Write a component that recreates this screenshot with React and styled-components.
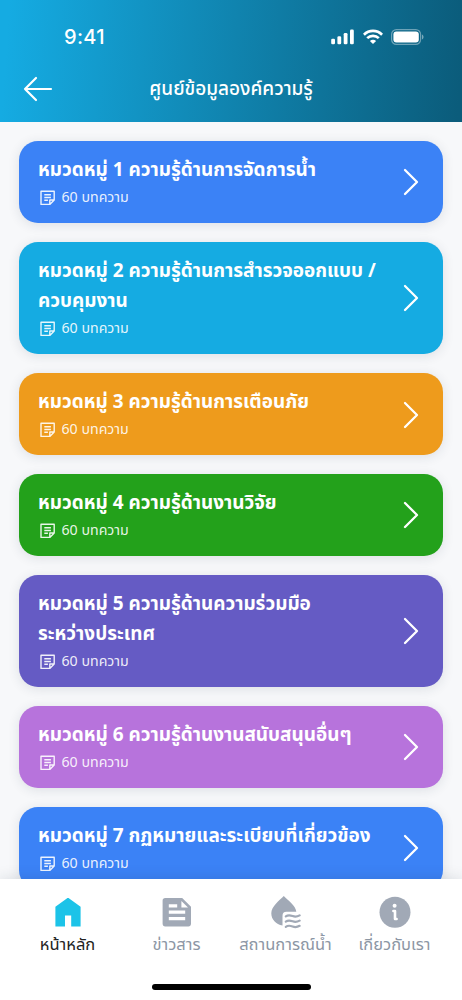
import React from 'react';
import styled, { createGlobalStyle } from 'styled-components';

const GlobalStyle = createGlobalStyle`
  * {
    box-sizing: border-box;
  }
  body {
    margin: 0;
    font-family: 'Noto Sans Thai', 'Noto Sans', sans-serif;
    background: #f7f8fa;
  }
  button {
    appearance: none;
    border: 0;
    padding: 0;
    background: none;
    color: inherit;
    font: inherit;
  }
  svg {
    display: block;
    flex: none;
  }
`;
const Screen = styled.div`
  display: flex;
  flex-direction: column;
  height: 1000px;
  overflow: hidden;
  background: #f7f8fa;
`;
const Header = styled.header`
  flex: none;
  height: 122px;
  color: #fff;
  background: linear-gradient(94deg, #15abe2 2%, #0b5c7b 99%);
`;
const StatusBar = styled.div`
  display: flex;
  align-items: center;
  justify-content: space-between;
  height: 56px;
  padding: 18px 38px 0 64px;
`;
const Clock = styled.span`
  font-family: Inter, sans-serif;
  font-size: 20px;
  font-weight: 500;
  line-height: 24px;
  letter-spacing: 0.3px;
`;
const StatusIcons = styled.div`
  display: flex;
  align-items: center;
  gap: 8px;
`;
const TitleBar = styled.div`
  display: grid;
  grid-template-columns: 60px 1fr 60px;
  align-items: center;
  height: 66px;
`;
const BackButton = styled.button`
  padding-left: 22px;
`;
const Title = styled.h1`
  margin: 0;
  padding-top: 2px;
  font-size: 19px;
  font-weight: 500;
  line-height: 30px;
  text-align: center;
  white-space: nowrap;
`;
const List = styled.main`
  flex: 1;
  min-height: 0;
  display: flex;
  flex-direction: column;
  gap: 18.95px;
  padding: 19px 19px 0;
  overflow: hidden;
`;
const Card = styled.article`
  flex: none;
  display: flex;
  align-items: center;
  justify-content: space-between;
  padding: 14.9px 23px 14.1px 19px;
  border-radius: 19px;
  color: #fff;
  background: ${props => props.$color};
  box-shadow: 0 2px 12px rgba(30, 50, 70, 0.12);
`;
const CardTitle = styled.h2`
  margin: 0;
  font-size: 18.95px;
  font-weight: 700;
  line-height: 30.8px;
  white-space: pre;
`;
const Count = styled.div`
  display: flex;
  align-items: center;
  gap: 6px;
  height: 22px;
  padding-left: 1.5px;
  font-size: 14.2px;
  line-height: 22px;
  color: rgba(255, 255, 255, 0.9);
`;
const TabBar = styled.nav`
  flex: none;
  position: relative;
  height: 121px;
  background: #fff;
  box-shadow: 0 0 14px rgba(30, 50, 70, 0.15);
`;
const Tabs = styled.div`
  display: grid;
  grid-template-columns: repeat(4, 109px);
  padding: 14px 13px 0;
`;
const Tab = styled.button`
  display: flex;
  flex-direction: column;
  align-items: center;
  color: ${props => (props.$active ? '#1cc3e8' : '#a1a9b6')};
`;
const TabLabel = styled.span`
  margin-top: 3px;
  font-size: 16.5px;
  line-height: 26px;
  white-space: nowrap;
  color: ${props => (props.$active ? '#222' : '#8c96a4')};
`;
const HomeIndicator = styled.div`
  width: 159px;
  height: 6px;
  margin: 26px auto 0;
  border-radius: 3px;
  background: #000;
`;

const SignalIcon = () => (
  <svg width="24" height="16" viewBox="0 0 24 16" fill="currentColor">
    <rect x="0.2" y="9.8" width="3.8" height="5.4" rx="1.3" />
    <rect x="6.4" y="7.2" width="3.8" height="8" rx="1.3" />
    <rect x="12.7" y="3.9" width="3.8" height="11.3" rx="1.3" />
    <rect x="19" y="0.6" width="3.8" height="14.6" rx="1.3" />
  </svg>
);

const WifiIcon = () => (
  <svg width="20" height="16" viewBox="0 0 20 16" fill="none" stroke="currentColor" strokeWidth="2.7">
    <path d="M.9 5.7C6 .7 14 .7 19.1 5.7" />
    <path d="M4.2 9.1c3.2-3.1 8.4-3.1 11.6 0" />
    <path d="M6.9 11.9c1.8-1.6 4.4-1.6 6.2 0L10 15z" fill="currentColor" stroke="none" />
  </svg>
);

const BatteryIcon = () => (
  <svg width="33" height="16" viewBox="0 0 33 16" fill="none">
    <rect x="0.6" y="0.6" width="29" height="14.8" rx="4.8" stroke="#fff" strokeOpacity="0.4" strokeWidth="1.2" />
    <rect x="2.4" y="2.4" width="25.4" height="11.2" rx="3" fill="#fff" />
    <path d="M31 5.5c2 .8 2 4.2 0 5z" fill="#fff" fillOpacity="0.45" />
  </svg>
);

const BackIcon = () => (
  <svg width="32" height="26" viewBox="0 0 32 26" fill="none" stroke="currentColor" strokeWidth="2.2" strokeLinecap="round" strokeLinejoin="round">
    <path d="M29 13H3M14 2L3 13l11 11" />
  </svg>
);

const ChevronIcon = () => (
  <svg width="18" height="28" viewBox="0 0 18 28" fill="none" stroke="currentColor" strokeWidth="2.3" strokeLinecap="round" strokeLinejoin="round">
    <path d="M3 2l12 12L3 26" />
  </svg>
);

const NoteIcon = () => (
  <svg width="16" height="16" viewBox="0 0 16 16" fill="none" stroke="currentColor" strokeWidth="1.4" strokeLinejoin="round">
    <path d="M1 1.2h13.2V10l-4.4 4.4H1zM14.2 10H9.8v4.4" />
    <path d="M4.3 4.8h6.6M4.3 7.5h6.6M4.3 10.2h3.6" />
  </svg>
);

const HomeIcon = () => (
  <svg width="32" height="36" viewBox="0 0 32 36" fill="currentColor">
    <path d="M14.8 5.4c.8-.6 1.6-.6 2.4 0L28.6 13.8v19.6h-9.4V22.6H13v10.8H3.4V13.8z" />
  </svg>
);

const NewsIcon = () => (
  <svg width="32" height="36" viewBox="0 0 32 36" fill="currentColor">
    <path fillRule="evenodd" d="M4.2 5h17l8.8 8.8v17c0 1.6-1 2.6-2.6 2.6H4.2c-1.6 0-2.6-1-2.6-2.6V7.6C1.6 6 2.6 5 4.2 5zM7.8 11.2v3.2h8.4v-3.2zM7.8 17.6v3.2h16.4v-3.2zM7.8 24v3.2h16.4V24zM20.4 8v6.6H27z" />
  </svg>
);

const WaterIcon = () => (
  <svg width="32" height="36" viewBox="0 0 32 36">
    <path d="M13.8 3C9.5 7.3 1.3 13.4 1.3 20.2c0 6.2 4.7 11.3 11.2 12.2V23c0-2.9 1.2-4.2 4-4.2h9.8C25.8 12.6 18 7.4 13.8 3z" fill="currentColor" />
    <path d="M15.8 23.4c2.5-1.8 4.5-1.2 6.8-.3s4.5.8 7-.7M15.8 28.6c2.5-1.8 4.5-1.2 6.8-.3s4.5.8 7-.7M15.8 33.8c2.5-1.8 4.5-1.2 6.8-.3s4.5.8 7-.7" fill="none" stroke="currentColor" strokeWidth="2.2" strokeLinecap="round" />
  </svg>
);

const InfoIcon = () => (
  <svg width="32" height="36" viewBox="0 0 32 36">
    <circle cx="16" cy="19.2" r="15.5" fill="currentColor" />
    <circle cx="15.6" cy="12.8" r="2" fill="#fff" />
    <path d="M14.4 18h1.6v8h1.6" fill="none" stroke="#fff" strokeWidth="2.6" strokeLinecap="round" strokeLinejoin="round" />
  </svg>
);

const categories = [
  { title: 'หมวดหมู่ 1 ความรู้ด้านการจัดการน้ำ', color: '#3b82f6' },
  { title: 'หมวดหมู่ 2 ความรู้ด้านการสำรวจออกแบบ /\nควบคุมงาน', color: '#15abe2' },
  { title: 'หมวดหมู่ 3 ความรู้ด้านการเตือนภัย', color: '#ee9b1c' },
  { title: 'หมวดหมู่ 4 ความรู้ด้านงานวิจัย', color: '#23a11b' },
  { title: 'หมวดหมู่ 5 ความรู้ด้านความร่วมมือ\nระหว่างประเทศ', color: '#655bc4' },
  { title: 'หมวดหมู่ 6 ความรู้ด้านงานสนับสนุนอื่นๆ', color: '#b773dc' },
  { title: 'หมวดหมู่ 7 กฏหมายและระเบียบที่เกี่ยวข้อง', color: '#3b82f6' },
];

const tabs = [
  { label: 'หน้าหลัก', Icon: HomeIcon, active: true },
  { label: 'ข่าวสาร', Icon: NewsIcon },
  { label: 'สถานการณ์น้ำ', Icon: WaterIcon },
  { label: 'เกี่ยวกับเรา', Icon: InfoIcon },
];

const App = () => (
  <>
    <GlobalStyle />
    <Screen>
      <Header>
        <StatusBar>
          <Clock>9:41</Clock>
          <StatusIcons>
            <SignalIcon />
            <WifiIcon />
            <BatteryIcon />
          </StatusIcons>
        </StatusBar>
        <TitleBar>
          <BackButton><BackIcon /></BackButton>
          <Title>ศูนย์ข้อมูลองค์ความรู้</Title>
        </TitleBar>
      </Header>
      <List>
        {categories.map(({ title, color }) => (
          <Card key={title} $color={color}>
            <div>
              <CardTitle>{title}</CardTitle>
              <Count>
                <NoteIcon />
                60 บทความ
              </Count>
            </div>
            <ChevronIcon />
          </Card>
        ))}
      </List>
      <TabBar>
        <Tabs>
          {tabs.map(({ label, Icon, active }) => (
            <Tab key={label} $active={active}>
              <Icon />
              <TabLabel $active={active}>{label}</TabLabel>
            </Tab>
          ))}
        </Tabs>
        <HomeIndicator />
      </TabBar>
    </Screen>
  </>
);

export default App;
